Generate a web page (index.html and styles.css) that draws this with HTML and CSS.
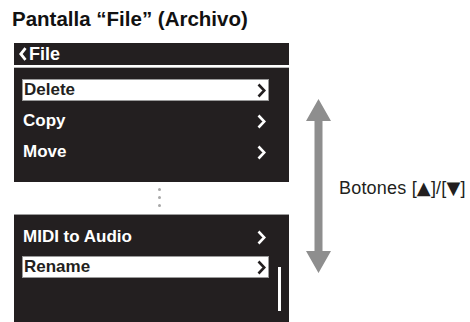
FILE: index.html
```html
<!DOCTYPE html>
<html lang="es">
<head>
<meta charset="utf-8">
<title>Pantalla File</title>
<link rel="stylesheet" href="styles.css">
</head>
<body>
<div class="page">
  <div class="left">
    <h1 class="title">Pantalla “File” (Archivo)</h1>
    <div class="screen">
      <div class="header">
        <svg class="back" width="8" height="14" viewBox="0 0 8 14"><polyline points="6.5,1.2 1.8,7 6.5,12.8" fill="none" stroke="#fff" stroke-width="2.8"/></svg>
        <span>File</span>
      </div>
      <div class="rule"></div>
      <ul class="menu top-menu">
        <li class="item sel"><span>Delete</span><svg class="chev" width="9" height="15" viewBox="0 0 9 15"><polyline points="1.5,1.5 7.3,7.5 1.5,13.5" fill="none" stroke="currentColor" stroke-width="2.6"/></svg></li>
        <li class="item"><span>Copy</span><svg class="chev" width="9" height="15" viewBox="0 0 9 15"><polyline points="1.5,1.5 7.3,7.5 1.5,13.5" fill="none" stroke="currentColor" stroke-width="2.6"/></svg></li>
        <li class="item"><span>Move</span><svg class="chev" width="9" height="15" viewBox="0 0 9 15"><polyline points="1.5,1.5 7.3,7.5 1.5,13.5" fill="none" stroke="currentColor" stroke-width="2.6"/></svg></li>
      </ul>
    </div>
    <div class="dots"><i></i><i></i><i></i></div>
    <div class="screen lower">
      <ul class="menu bottom-menu">
        <li class="item"><span>MIDI to Audio</span><svg class="chev" width="9" height="15" viewBox="0 0 9 15"><polyline points="1.5,1.5 7.3,7.5 1.5,13.5" fill="none" stroke="currentColor" stroke-width="2.6"/></svg></li>
        <li class="item sel"><span>Rename</span><svg class="chev" width="9" height="15" viewBox="0 0 9 15"><polyline points="1.5,1.5 7.3,7.5 1.5,13.5" fill="none" stroke="currentColor" stroke-width="2.6"/></svg></li>
      </ul>
      <div class="scrollbar"></div>
    </div>
  </div>
  <div class="right">
    <svg class="arrow" width="25" height="174" viewBox="0 0 25 174"><polygon points="12.5,0 25,22 16.5,22 16.5,152 25,152 12.5,174 0,152 8.5,152 8.5,22 0,22" fill="#8e8e8e"/></svg>
    <span class="label">Botones [<span class="tri">▲</span>]/[<span class="tri">▼</span>]</span>
  </div>
</div>
</body>
</html>
```
FILE: styles.css
```css
html, body {
  margin: 0;
  padding: 0;
  background: #fff;
}
body {
  width: 470px;
  height: 322px;
  overflow: hidden;
  font-family: "Liberation Sans", Arial, sans-serif;
  color: #231f20;
}
.page {
  display: flex;
  align-items: flex-start;
}
.left {
  width: 289px;
  display: flex;
  flex-direction: column;
}
.title {
  margin: 0;
  padding: 7px 0 0 12px;
  font-size: 20.5px;
  line-height: 23px;
  font-weight: bold;
  color: #111;
  white-space: nowrap;
}
.screen {
  margin-left: 14px;
  width: 275px;
  background: #231f20;
  color: #fff;
  position: relative;
}
.screen:first-of-type {
  margin-top: 13px;
}
.header {
  height: 22px;
  display: flex;
  align-items: center;
  gap: 2px;
  padding-left: 5px;
  font-size: 18px;
  font-weight: bold;
}
.rule {
  height: 2px;
  background: #fff;
  border-bottom: 1px solid #b8b8b8;
}
.menu {
  list-style: none;
  margin: 0;
  display: flex;
  flex-direction: column;
}
.top-menu {
  padding: 11px 20px 19px 8px;
  gap: 9px;
}
.bottom-menu {
  padding: 11px 20px 44px 8px;
  gap: 8px;
}
.item {
  box-sizing: border-box;
  height: 22px;
  display: flex;
  align-items: center;
  justify-content: space-between;
  padding: 0 2px 0 0;
  border: 1px solid transparent;
  font-size: 17px;
  font-weight: bold;
  color: #fff;
}
.item.sel {
  background: #fff;
  color: #231f20;
  border-color: #9a9a9a;
  padding-left: 1px;
}
.chev {
  display: block;
}
.dots {
  height: 32px;
  box-sizing: border-box;
  padding: 6px 0 0 144px;
  display: flex;
  flex-direction: column;
  gap: 5px;
  margin-left: 14px;
}
.dots i {
  display: block;
  width: 3px;
  height: 3px;
  border-radius: 50%;
  background: #a8a8a8;
}
.screen.lower {
  border-top: 1px solid #9c9c9c;
}
.scrollbar {
  position: absolute;
  left: 264px;
  top: 52px;
  width: 3px;
  height: 44px;
  background: #fff;
}
.right {
  margin-left: 17px;
  padding-top: 99px;
  display: flex;
  align-items: center;
}
.arrow {
  display: block;
}
.label {
  margin-left: 8px;
  margin-top: 4px;
  font-size: 18px;
  letter-spacing: 0.2px;
  white-space: nowrap;
  color: #231f20;
}
.tri {
  font-family: "DejaVu Sans", sans-serif;
  font-size: 18px;
}
```
